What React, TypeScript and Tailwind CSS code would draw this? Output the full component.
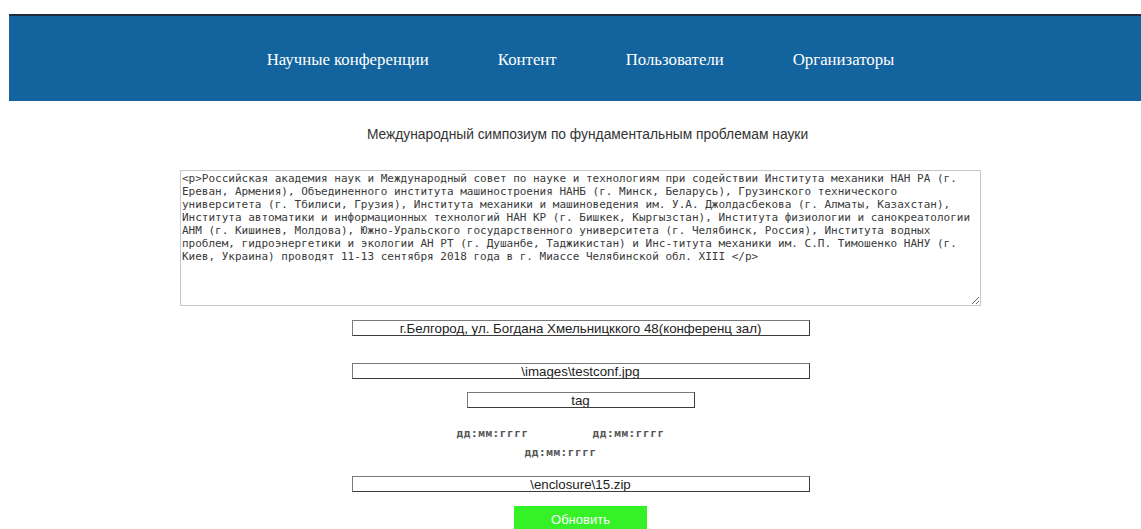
import React from "react";

const navItems = ["Научные конференции", "Контент", "Пользователи", "Организаторы"];

// description body, kept as the editor shows it, one line per row
const descriptionLines = [
  "<p>Российская академия наук и Международный совет по науке и технологиям при содействии Института механики НАН РА (г.",
  "Ереван, Армения), Объединенного института машиностроения НАНБ (г. Минск, Беларусь), Грузинского технического",
  "университета (г. Тбилиси, Грузия), Института механики и машиноведения им. У.А. Джолдасбекова (г. Алматы, Казахстан),",
  "Института автоматики и информационных технологий НАН КР (г. Бишкек, Кыргызстан), Института физиологии и санокреатологии",
  "АНМ (г. Кишинев, Молдова), Южно-Уральского государственного университета (г. Челябинск, Россия), Института водных",
  "проблем, гидроэнергетики и экологии АН РТ (г. Душанбе, Таджикистан) и Инс-титута механики им. С.П. Тимошенко НАНУ (г.",
  "Киев, Украина) проводят 11-13 сентября 2018 года в г. Миассе Челябинской обл. XIII </p>",
];

function Field({ value, width }: { value: string; width: string }) {
  return (
    <input
      type="text"
      defaultValue={value}
      className={`${width} block h-[16px] box-border border border-t-[#7a7a7a] border-l-[#7a7a7a] border-r-[#3c3c3c] border-b-[#3c3c3c] bg-white px-1 py-0 text-center text-[13.3px] leading-[14px] text-[#222] outline-none [font-family:'Liberation_Sans',Arial,sans-serif]`}
    />
  );
}

function DateBox() {
  return (
    <div className="w-[132px] pl-[10px] text-left text-[11px] font-semibold leading-[14px] tracking-[0.6px] text-[#555] [font-family:'DejaVu_Sans_Mono',monospace]">
      дд:мм:гггг
    </div>
  );
}

export default function App() {
  return (
    <div className="h-[529px] overflow-hidden bg-white pl-[9px] [font-family:'Liberation_Sans',Arial,sans-serif]">
      <div className="h-[14px]" />
      <header className="h-[87px] border-t-2 border-[#1f2d3a] bg-[#12639e] flex items-center justify-center gap-[69px] pl-[11px] pt-[2px]">
        {navItems.map((item) => (
          <a
            key={item}
            href="#"
            className="text-[16.8px] text-white [font-family:'Liberation_Serif','Times_New_Roman',serif]"
          >
            {item}
          </a>
        ))}
      </header>

      <main className="flex flex-col items-center pl-[11px]">
        <h1 className="mt-[26px] pl-[14px] text-[13.8px] leading-[16px] font-normal text-[#333]">
          Международный симпозиум по фундаментальным проблемам науки
        </h1>

        <textarea
          readOnly
          wrap="off"
          defaultValue={descriptionLines.join("\n")}
          className="mt-[27px] h-[136px] w-[801px] box-border border border-[#c8c8c8] px-[1px] py-[1px] text-[11px] leading-[13px] text-[#3a3a3a] outline-none overflow-hidden [font-family:'DejaVu_Sans_Mono',monospace]"
        />

        <div className="mt-[14px]">
          <Field value="г.Белгород, ул. Богдана Хмельницккого 48(конференц зал)" width="w-[458px]" />
        </div>
        <div className="mt-[27px]">
          <Field value="\images\testconf.jpg" width="w-[458px]" />
        </div>
        <div className="mt-[13px]">
          <Field value="tag" width="w-[228px]" />
        </div>

        <div className="mt-[19px] flex gap-[4px]">
          <DateBox />
          <DateBox />
        </div>
        <div className="mt-[5px]">
          <DateBox />
        </div>

        <div className="mt-[16px]">
          <Field value="\enclosure\15.zip" width="w-[458px]" />
        </div>

        <button className="mt-[14px] h-[26px] w-[133px] shrink-0 bg-[#35f226] pt-[2px] text-[13px] text-white">
          Обновить
        </button>
      </main>
    </div>
  );
}
